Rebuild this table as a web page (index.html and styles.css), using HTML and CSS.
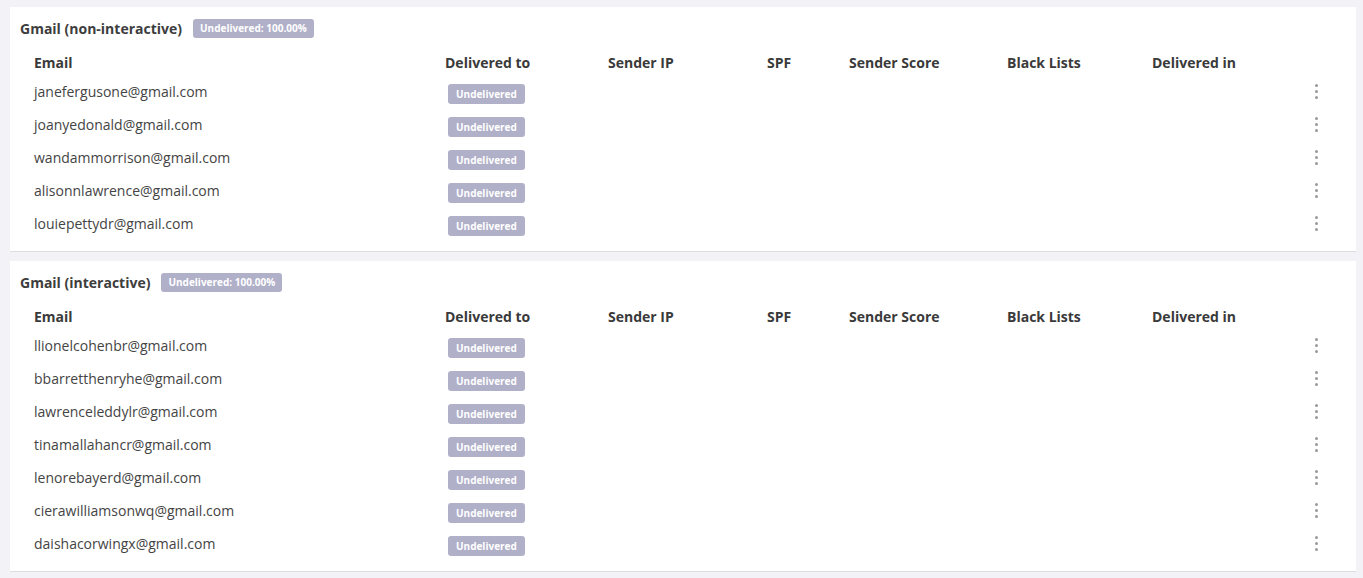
FILE: index.html
```html
<!DOCTYPE html>
<html lang="en">

<head>
    <meta charset="UTF-8">
    <title>Delivery report</title>
    <link rel="stylesheet" href="styles.css">
</head>

<body>
    <section class="card">
        <div class="card-title">
            <span>Gmail (non-interactive)</span>
            <span class="tag tag-title">Undelivered: 100.00%</span>
        </div>
        <div class="grid head">
            <div>Email</div>
            <div>Delivered to</div>
            <div>Sender IP</div>
            <div>SPF</div>
            <div>Sender Score</div>
            <div>Black Lists</div>
            <div>Delivered in</div>
            <div></div>
        </div>
        <div class="grid row">
            <div>janefergusone@gmail.com</div>
            <div><span class="tag">Undelivered</span></div>
            <div></div><div></div><div></div><div></div><div></div>
            <div class="more"><i></i><i></i><i></i></div>
        </div>
        <div class="grid row">
            <div>joanyedonald@gmail.com</div>
            <div><span class="tag">Undelivered</span></div>
            <div></div><div></div><div></div><div></div><div></div>
            <div class="more"><i></i><i></i><i></i></div>
        </div>
        <div class="grid row">
            <div>wandammorrison@gmail.com</div>
            <div><span class="tag">Undelivered</span></div>
            <div></div><div></div><div></div><div></div><div></div>
            <div class="more"><i></i><i></i><i></i></div>
        </div>
        <div class="grid row">
            <div>alisonnlawrence@gmail.com</div>
            <div><span class="tag">Undelivered</span></div>
            <div></div><div></div><div></div><div></div><div></div>
            <div class="more"><i></i><i></i><i></i></div>
        </div>
        <div class="grid row">
            <div>louiepettydr@gmail.com</div>
            <div><span class="tag">Undelivered</span></div>
            <div></div><div></div><div></div><div></div><div></div>
            <div class="more"><i></i><i></i><i></i></div>
        </div>
    </section>

    <section class="card">
        <div class="card-title">
            <span>Gmail (interactive)</span>
            <span class="tag tag-title">Undelivered: 100.00%</span>
        </div>
        <div class="grid head">
            <div>Email</div>
            <div>Delivered to</div>
            <div>Sender IP</div>
            <div>SPF</div>
            <div>Sender Score</div>
            <div>Black Lists</div>
            <div>Delivered in</div>
            <div></div>
        </div>
        <div class="grid row">
            <div>llionelcohenbr@gmail.com</div>
            <div><span class="tag">Undelivered</span></div>
            <div></div><div></div><div></div><div></div><div></div>
            <div class="more"><i></i><i></i><i></i></div>
        </div>
        <div class="grid row">
            <div>bbarretthenryhe@gmail.com</div>
            <div><span class="tag">Undelivered</span></div>
            <div></div><div></div><div></div><div></div><div></div>
            <div class="more"><i></i><i></i><i></i></div>
        </div>
        <div class="grid row">
            <div>lawrenceleddylr@gmail.com</div>
            <div><span class="tag">Undelivered</span></div>
            <div></div><div></div><div></div><div></div><div></div>
            <div class="more"><i></i><i></i><i></i></div>
        </div>
        <div class="grid row">
            <div>tinamallahancr@gmail.com</div>
            <div><span class="tag">Undelivered</span></div>
            <div></div><div></div><div></div><div></div><div></div>
            <div class="more"><i></i><i></i><i></i></div>
        </div>
        <div class="grid row">
            <div>lenorebayerd@gmail.com</div>
            <div><span class="tag">Undelivered</span></div>
            <div></div><div></div><div></div><div></div><div></div>
            <div class="more"><i></i><i></i><i></i></div>
        </div>
        <div class="grid row">
            <div>cierawilliamsonwq@gmail.com</div>
            <div><span class="tag">Undelivered</span></div>
            <div></div><div></div><div></div><div></div><div></div>
            <div class="more"><i></i><i></i><i></i></div>
        </div>
        <div class="grid row">
            <div>daishacorwingx@gmail.com</div>
            <div><span class="tag">Undelivered</span></div>
            <div></div><div></div><div></div><div></div><div></div>
            <div class="more"><i></i><i></i><i></i></div>
        </div>
    </section>
</body>

</html>
```

FILE: styles.css
```css
body {
    margin: 0;
    padding: 7px 7px 0 10px;
    font-family: "Open Sans", sans-serif;
    background: #f3f3f7;
    color: #444;
    display: flex;
    flex-direction: column;
    gap: 9px;
}

.card {
    background: #fff;
    border-bottom: 1px solid #dcdce2;
    padding: 10px 10px 9px 10px;
}

.card-title {
    display: flex;
    align-items: center;
    gap: 11px;
    height: 22px;
    font-size: 14px;
    font-weight: 700;
    color: #3d3d3d;
}

.tag {
    display: inline-block;
    background: #b1b0c9;
    color: #fff;
    font-size: 10px;
    font-weight: 700;
    line-height: 20px;
    padding: 0 8px;
    border-radius: 3px;
}

.tag-title {
    line-height: 19px;
    padding: 0 7px;
}

.grid {
    display: grid;
    grid-template-columns: 411px 163px 159px 82px 158px 145px 162px 20px;
    padding-left: 14px;
    align-items: center;
}

.head {
    height: 30px;
    margin-top: 8px;
    font-size: 14px;
    font-weight: 700;
    color: #3a3a3a;
}

.row {
    height: 33px;
    font-size: 14px;
    color: #444;
}

.row > div:first-child {
    margin-top: -4px;
}

.row .tag {
    margin-left: 3px;
    margin-top: -1px;
}

.more {
    display: flex;
    flex-direction: column;
    align-items: center;
    gap: 3px;
    width: 4px;
    margin-top: -4px;
}

.more i {
    width: 3px;
    height: 3px;
    border-radius: 50%;
    background: #9a9a9a;
}
```
